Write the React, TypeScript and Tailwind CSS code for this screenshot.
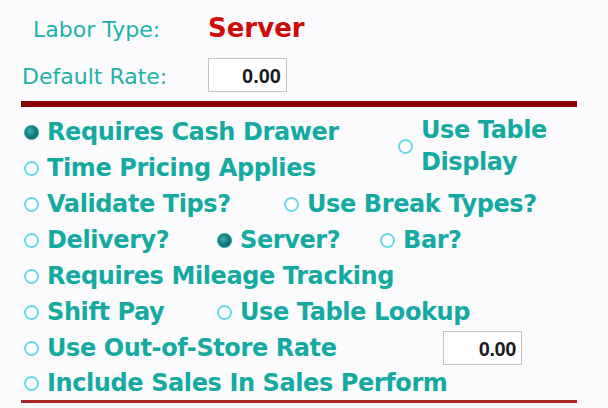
import React from 'react'

function Radio({ checked }: { checked?: boolean }) {
  return checked ? (
    <span className="w-[15px] h-[15px] shrink-0 rounded-full border border-[#1d9a9c] bg-[radial-gradient(circle_at_40%_40%,#3aaeb0_0%,#0d767b_55%,#0a5f66_100%)]" />
  ) : (
    <span className="w-[15px] h-[15px] shrink-0 rounded-full border-2 border-[#6ad8e8] bg-white" />
  )
}

function Option({ label, checked, className }: { label: string; checked?: boolean; className?: string }) {
  return (
    <div className={`flex items-center h-[36px] ${className || ''}`}>
      <Radio checked={checked} />
      <span className="ml-[8px] whitespace-nowrap">{label}</span>
    </div>
  )
}

function RateBox({ value }: { value: string }) {
  return (
    <div className="w-[79px] h-[34px] bg-white border border-[#c4c4c4] flex items-center justify-end pr-[5px] pt-[2px]">
      <span className="font-['Liberation_Sans',Arial,sans-serif] font-bold text-[20px] leading-none text-[#1b1b1b]">{value}</span>
    </div>
  )
}

export default function App() {
  return (
    <div className="w-[608px] h-[408px] bg-[#fbfbfe] overflow-hidden font-['DejaVu_Sans',Verdana,sans-serif]">
      {/* Header */}
      <div className="flex items-baseline pt-[13px] pl-[33px] h-[43px]">
        <span className="w-[175px] text-[22px] leading-[30px] text-[#20b1a9]">Labor Type:</span>
        <span className="text-[26px] leading-[30px] font-bold text-[#d10a0a]">Server</span>
      </div>
      <div className="flex items-center mt-[15px] pl-[22px]">
        <span className="w-[186px] text-[22px] leading-[30px] text-[#20b1a9] pt-[3px]">Default Rate:</span>
        <RateBox value="0.00" />
      </div>

      <div className="ml-[21px] mt-[9px] w-[556px] h-[6px] bg-[#8b0000]" />

      {/* Options */}
      <div className="mt-[7px] pl-[24px] text-[24px] tracking-[-0.4px] font-bold text-[#14aaa1]">
        <div className="flex">
          <div className="w-[374px]">
            <Option label="Requires Cash Drawer" checked />
            <Option label="Time Pricing Applies" />
          </div>
          <div className="flex items-center h-[64px]">
            <Radio />
            <span className="ml-[8px] leading-[32px]">
              Use Table
              <br />
              Display
            </span>
          </div>
        </div>
        <div className="flex">
          <Option label="Validate Tips?" className="w-[260px]" />
          <Option label="Use Break Types?" />
        </div>
        <div className="flex">
          <Option label="Delivery?" className="w-[193px]" />
          <Option label="Server?" checked className="w-[163px]" />
          <Option label="Bar?" />
        </div>
        <Option label="Requires Mileage Tracking" />
        <div className="flex">
          <Option label="Shift Pay" className="w-[193px]" />
          <Option label="Use Table Lookup" />
        </div>
        <div className="flex items-center">
          <Option label="Use Out-of-Store Rate" className="w-[419px]" />
          <RateBox value="0.00" />
        </div>
        <Option label="Include Sales In Sales Perform" className="!h-[34px]" />
      </div>

      <div className="ml-[21px] w-[556px] h-[3px] bg-[#a82626]" />
    </div>
  )
}
